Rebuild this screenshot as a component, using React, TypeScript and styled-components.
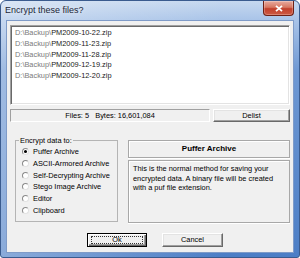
import { FC } from "react";
import styled, { createGlobalStyle, css } from "styled-components";

const GlobalStyle = createGlobalStyle`
  html, body {
    margin: 0;
    padding: 0;
    background: #ffffff;
  }
  body {
    font-family: "Liberation Sans", Arial, sans-serif;
  }
`;

const FONT = `"Liberation Sans", Arial, sans-serif`;

const Window = styled.div`
  box-sizing: border-box;
  width: 300px;
  height: 258px;
  display: flex;
  flex-direction: column;
  padding: 0 6px 5px 6px;
  border: 1px solid #3a5b8e;
  border-radius: 6px 6px 3px 3px;
  overflow: hidden;
  background:
    linear-gradient(90deg, rgba(255, 255, 255, 0.35) 0%, rgba(255, 255, 255, 0) 75%),
    linear-gradient(180deg, #c6d8ef 0px, #a8c3e8 20px, #6e98d3 70px, #4c7ec6 100%);
`;

const TitleBar = styled.div`
  height: 20px;
  display: flex;
  align-items: flex-start;
`;

const Title = styled.span`
  margin: 4px 0 0 -2px;
  font-family: ${FONT};
  font-size: 9px;
  line-height: 11px;
  color: #1b2738;
  text-shadow: 0 0 5px rgba(255, 255, 255, 0.9);
`;

const CloseButton = styled.div`
  box-sizing: border-box;
  margin-left: auto;
  margin-right: -1px;
  width: 31px;
  height: 15px;
  display: flex;
  align-items: center;
  justify-content: center;
  border: 1px solid #6e2015;
  border-top: none;
  border-radius: 0 0 4px 4px;
  background: linear-gradient(180deg, #e7ab9f 0%, #d77762 45%, #c2402c 55%, #cd5a43 100%);
  box-shadow: inset 0 0 0 1px rgba(255, 255, 255, 0.25);
`;

const Client = styled.div`
  flex: 1;
  display: flex;
  flex-direction: column;
  padding: 4px 3px 0 3px;
  background: #f0f0f0;
  box-shadow: 0 0 0 1px #7f9bc8;
  font-family: ${FONT};
  font-size: 7.4px;
  color: #000;
`;

const FileList = styled.div`
  box-sizing: border-box;
  height: 80px;
  padding: 2px 0 0 4px;
  background: #ffffff;
  border: 1px solid;
  border-color: #a0a0a0 #ffffff #ffffff #a0a0a0;
  box-shadow: inset 1px 1px 0 #696969, inset -1px -1px 0 #e3e3e3;
`;

const FileRow = styled.div`
  height: 10.75px;
  line-height: 10.75px;
  white-space: nowrap;
`;

const Folder = styled.span`
  color: #7a7a7a;
`;

const FileName = styled.span`
  color: #1a1a1a;
`;

const StatusRow = styled.div`
  display: flex;
  gap: 3px;
  height: 13px;
  margin-top: 4px;
`;

const StatusPanel = styled.div`
  box-sizing: border-box;
  width: 200px;
  border: 1px solid;
  border-color: #a0a0a0 #ffffff #ffffff #a0a0a0;
  text-align: center;
  line-height: 11px;
  white-space: pre;
`;

const PushButton = styled.button<{ $width?: number; $isDefault?: boolean }>`
  position: relative;
  box-sizing: border-box;
  ${(p) => (p.$width ? `width: ${p.$width}px;` : "flex: 1;")}
  height: 100%;
  margin: 0;
  padding: 0;
  font-family: ${FONT};
  font-size: 7.4px;
  line-height: 10px;
  color: #000;
  background: #f0f0f0;
  border: 1px solid;
  border-color: #ffffff #696969 #696969 #ffffff;
  box-shadow: inset -1px -1px 0 #a0a0a0, inset 1px 1px 0 #e3e3e3;
  ${(p) =>
    p.$isDefault &&
    css`
      border-color: #000;
      box-shadow: inset 1px 1px 0 #ffffff, inset -1px -1px 0 #696969, inset -2px -2px 0 #a0a0a0;
      &::after {
        content: "";
        position: absolute;
        inset: 2px 3px;
        border: 1px dotted #333;
        pointer-events: none;
      }
    `}
`;

const GroupRow = styled.div`
  display: flex;
  align-items: flex-start;
  gap: 10px;
  margin-top: 14px;
  padding-left: 5px;
`;

const GroupBox = styled.fieldset`
  box-sizing: border-box;
  width: 103px;
  height: 86px;
  margin: 0;
  padding: 1px 0 0 6px;
  border: 1px solid #b4b4b4;
  min-width: 0;
`;

const GroupLegend = styled.legend`
  margin-left: -3px;
  padding: 0 1px;
  line-height: 9px;
`;

const OptionRow = styled.label`
  display: flex;
  align-items: center;
  gap: 4px;
  height: 11.7px;
  white-space: nowrap;
`;

const Radio = styled.span<{ $checked?: boolean }>`
  box-sizing: border-box;
  width: 7px;
  height: 7px;
  display: flex;
  align-items: center;
  justify-content: center;
  border-radius: 50%;
  border: 1px solid;
  border-color: #8a8a8a #e2e2e2 #e2e2e2 #8a8a8a;
  background: #ffffff;
  &::after {
    content: "";
    width: 3px;
    height: 3px;
    border-radius: 50%;
    background: ${(p) => (p.$checked ? "#000" : "transparent")};
  }
`;

const InfoPanel = styled.div`
  display: flex;
  flex-direction: column;
  gap: 2px;
  width: 162px;
  margin-top: 4px;
`;

const EtchedBox = styled.div`
  box-sizing: border-box;
  border: 1px solid #a8a8a8;
  box-shadow: inset 1px 1px 0 #ffffff, 0 1px 0 #ffffff;
`;

const InfoTitle = styled(EtchedBox)`
  height: 18px;
  line-height: 16px;
  text-align: center;
  font-weight: bold;
  font-size: 8px;
`;

const InfoText = styled(EtchedBox)`
  height: 63px;
  padding: 3px 4px;
  line-height: 9.5px;
`;

const ButtonRow = styled.div`
  display: flex;
  gap: 15px;
  height: 14px;
  margin-top: 10px;
  padding-left: 77px;
`;

const files = [
  "PM2009-10-22.zip",
  "PM2009-11-23.zip",
  "PM2009-11-28.zip",
  "PM2009-12-19.zip",
  "PM2009-12-20.zip",
];

const targets = [
  "Puffer Archive",
  "ASCII-Armored Archive",
  "Self-Decrypting Archive",
  "Stego Image Archive",
  "Editor",
  "Clipboard",
];

const App: FC = () => {
  return (
    <>
      <GlobalStyle />
      <Window>
        <TitleBar>
          <Title>Encrypt these files?</Title>
          <CloseButton>
            <svg width="8" height="7" viewBox="0 0 8 7">
              <path d="M1 0.8 L7 6.2 M7 0.8 L1 6.2" stroke="#ffffff" strokeWidth="1.8" />
            </svg>
          </CloseButton>
        </TitleBar>
        <Client>
          <FileList>
            {files.map((f) => (
              <FileRow key={f}>
                <Folder>D:\Backup\</Folder>
                <FileName>{f}</FileName>
              </FileRow>
            ))}
          </FileList>
          <StatusRow>
            <StatusPanel>{"Files: 5   Bytes: 16,601,084"}</StatusPanel>
            <PushButton>Delist</PushButton>
          </StatusRow>
          <GroupRow>
            <GroupBox>
              <GroupLegend>Encrypt data to:</GroupLegend>
              {targets.map((t, i) => (
                <OptionRow key={t}>
                  <Radio $checked={i === 0} />
                  {t}
                </OptionRow>
              ))}
            </GroupBox>
            <InfoPanel>
              <InfoTitle>Puffer Archive</InfoTitle>
              <InfoText>
                This is the normal method for saving your encrypted data. A binary file will be created
                with a puf file extension.
              </InfoText>
            </InfoPanel>
          </GroupRow>
          <ButtonRow>
            <PushButton $width={60} $isDefault>
              Ok
            </PushButton>
            <PushButton $width={61}>Cancel</PushButton>
          </ButtonRow>
        </Client>
      </Window>
    </>
  );
};

export default App;
